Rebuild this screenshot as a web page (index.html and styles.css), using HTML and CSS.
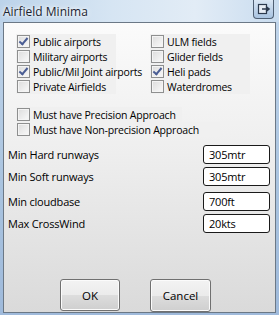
FILE: index.html
```html
<!DOCTYPE html>
<html>
<head>
<meta charset="utf-8">
<link rel="stylesheet" href="styles.css">
</head>
<body>
<div class="window">
  <div class="titlebar">
    <span class="title">Airfield Minima</span>
    <span class="tbtn">
      <svg width="14" height="12" viewBox="0 0 14 12">
        <rect x="1.5" y="1.5" width="8" height="9" fill="#e8eef6" stroke="#2c3a4e" stroke-width="1.2"/>
        <path d="M5 6 H11 M9 3.5 L12 6 L9 8.5" fill="none" stroke="#2c3a4e" stroke-width="1.6"/>
      </svg>
    </span>
  </div>
  <div class="client">
    <div class="groups">
      <div class="panel">
        <label class="cb"><span class="box checked"></span>Public airports</label>
        <label class="cb"><span class="box"></span>Military airports</label>
        <label class="cb"><span class="box checked"></span>Public/Mil Joint airports</label>
        <label class="cb"><span class="box"></span>Private Airfields</label>
      </div>
      <div class="panel right">
        <label class="cb"><span class="box"></span>ULM fields</label>
        <label class="cb"><span class="box"></span>Glider fields</label>
        <label class="cb"><span class="box checked"></span>Heli pads</label>
        <label class="cb"><span class="box"></span>Waterdromes</label>
      </div>
    </div>
    <div class="approach">
      <label class="cb single p1"><span class="box"></span>Must have Precision Approach</label>
      <label class="cb single p2"><span class="box"></span>Must have Non-precision Approach</label>
    </div>
    <div class="fields">
      <div class="field"><span>Min Hard runways</span><span class="input">305mtr</span></div>
      <div class="field"><span>Min Soft runways</span><span class="input">305mtr</span></div>
      <div class="field gap"><span>Min cloudbase</span><span class="input">700ft</span></div>
      <div class="field"><span>Max CrossWind</span><span class="input">20kts</span></div>
    </div>
    <div class="buttons">
      <button class="btn">OK</button>
      <button class="btn cancel">Cancel</button>
    </div>
  </div>
</div>
</body>
</html>
```
FILE: styles.css
```css
html, body {
  margin: 0;
  padding: 0;
}
body {
  width: 279px;
  height: 315px;
  overflow: hidden;
  font-family: "Open Sans", "Noto Sans", sans-serif;
  font-size: 10.5px;
  letter-spacing: -0.2px;
  color: #000;
  background: linear-gradient(180deg, #c3d7ec 0%, #a9c3df 60%, #9fbadb 100%);
}
.window {
  height: 315px;
  display: flex;
  flex-direction: column;
}
.titlebar {
  height: 22px;
  display: flex;
  align-items: flex-start;
  justify-content: space-between;
  background: linear-gradient(90deg, #bcd3ea 0%, #d6e5f3 40%, #e2ecf6 70%, #c9dcef 100%);
}
.title {
  margin: 3px 0 0 3px;
  font-size: 12px;
  letter-spacing: 0;
  color: #1b2430;
  text-shadow: 0 0 6px #fff, 0 0 3px #fff;
}
.tbtn {
  width: 19px;
  height: 18px;
  margin-right: 5px;
  border: 1px solid #4f5f73;
  border-top: none;
  border-radius: 0 0 4px 4px;
  background: linear-gradient(180deg, #d9e6f4 0%, #c0d4ea 50%, #aac4e1 100%);
  display: flex;
  align-items: center;
  justify-content: center;
}
.client {
  flex: 1;
  margin: 0 3px 2px 3px;
  border: 1px solid #6b7886;
  background: linear-gradient(180deg, #fbfbfb 0%, #eeeeee 45%, #dadada 100%);
  display: flex;
  flex-direction: column;
}
.groups {
  display: flex;
  margin: 11px 0 0 12px;
  gap: 34px;
}
.panel {
  width: 100px;
  background: #f0f0f0;
  display: flex;
  flex-direction: column;
}
.cb {
  height: 15px;
  display: flex;
  align-items: center;
  padding-left: 1px;
  white-space: nowrap;
}
.box {
  box-sizing: border-box;
  width: 13px;
  height: 13px;
  margin-right: 3px;
  border: 1px solid #8e8f8f;
  background: linear-gradient(135deg, #dcdcdc 0%, #f4f4f4 80%);
  box-shadow: inset 0 0 0 1px #f4f4f4;
  flex: none;
  position: relative;
}
.box.checked::after {
  content: "";
  position: absolute;
  left: 3px;
  top: 0px;
  width: 3px;
  height: 7px;
  border: solid #4a5d94;
  border-width: 0 2px 2px 0;
  transform: rotate(40deg);
}
.approach {
  margin: 13px 0 0 12px;
  display: flex;
  flex-direction: column;
  align-items: flex-start;
}
.single {
  background: #f0f0f0;
}
.p1 { width: 165px; }
.p2 { width: 203px; }
.fields {
  margin: 8px 5px 0 4px;
  display: flex;
  flex-direction: column;
  gap: 3px;
}
.field {
  height: 19px;
  display: flex;
  align-items: center;
  justify-content: space-between;
  font-size: 11px;
}
.field.gap { margin-top: 3px; }
.input {
  box-sizing: border-box;
  width: 67px;
  height: 19px;
  border: 1px solid #1a1a1a;
  border-radius: 3px;
  background: #fff;
  padding-left: 5px;
  line-height: 17px;
}
.buttons {
  margin-top: auto;
  display: flex;
  padding-left: 56px;
  gap: 30px;
}
.btn {
  width: 60px;
  height: 32px;
  font-family: "Open Sans", sans-serif;
  font-size: 11.5px;
  color: #000;
  border: 1px solid #707070;
  border-radius: 3px;
  background: linear-gradient(180deg, #f3f3f3 0%, #ebebeb 50%, #dddddd 51%, #cfcfcf 100%);
  box-shadow: inset 0 0 0 1px #fbfbfb;
  padding: 0;
}
.cancel {
  width: 61px;
  height: 33px;
}
```
